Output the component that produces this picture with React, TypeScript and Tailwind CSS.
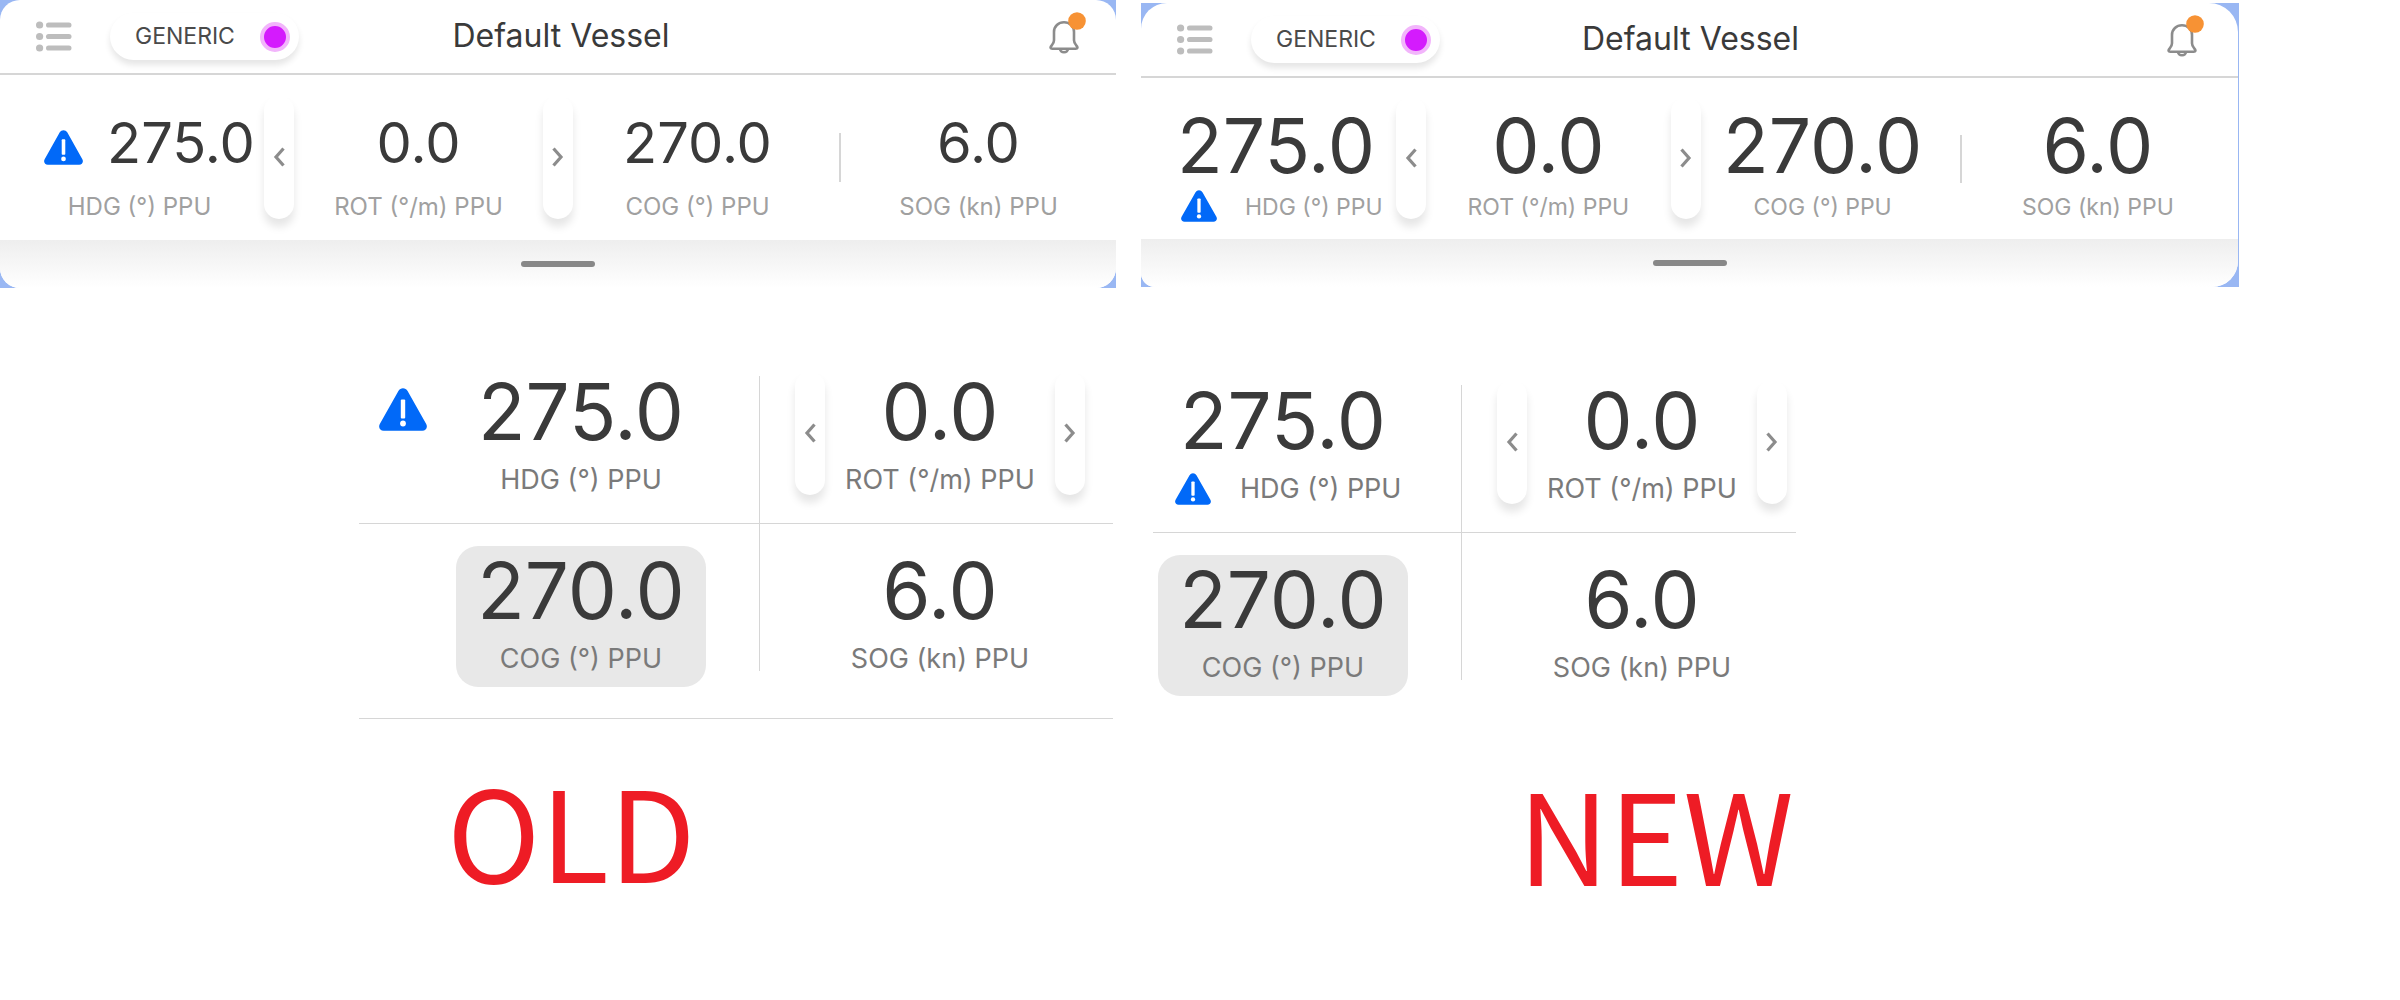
import type { ReactNode } from "react";

function ListIcon() {
  return (
    <svg width="36" height="32" viewBox="0 0 36 32" fill="#bdbdbd" aria-hidden="true">
      {[4, 15.5, 27].map((y) => (
        <g key={y}>
          <circle cx="3.6" cy={y} r="3.6" />
          <rect x="10" y={y - 2.6} width="25.5" height="5.2" rx="2.6" />
        </g>
      ))}
    </svg>
  );
}

function BellIcon() {
  return (
    <svg width="37" height="50" viewBox="0 0 37 50" fill="none" aria-hidden="true">
      <path
        d="M15 10.3c-5.6 0-10 4-10 9.6v8.3c0 2.2-.9 3.700-2.300 5.300-1.900 2-1.200 3.200.6 3.200h23.400c1.800 0 2.500-1.200.6-3.200-1.400-1.600-2.300-3.100-2.300-5.300v-8.300c0-5.600-4.400-9.600-10-9.600z"
        stroke="#8c8c8c"
        strokeWidth="2.600"
      />
      <path d="M11 36.500a4 3.800 0 0 0 8 0" stroke="#8c8c8c" strokeWidth="2.600" />
      <circle cx="28" cy="9" r="8.800" fill="#f79234" />
    </svg>
  );
}

function WarningIcon({ className }: { className: string }) {
  return (
    <svg viewBox="0 0 48 43" preserveAspectRatio="none" className={className} role="img" aria-label="Warning">
      <path
        d="M19.400 2.900c2-3.600 7.200-3.600 9.200 0l18.600 33.100c1.800 3.200-.3 6.700-3.900 6.700H4.700c-3.600 0-5.700-3.500-3.900-6.700z"
        fill="#0169f8"
      />
      <rect x="21.800" y="11.500" width="4.400" height="19" rx="1" fill="#fff" />
      <circle cx="24" cy="35.500" r="2.900" fill="#fff" />
    </svg>
  );
}

function Chevron({ dir }: { dir: "left" | "right" }) {
  return (
    <svg width="12" height="20" viewBox="0 0 12 20" fill="none" stroke="#8c8c8c" strokeWidth="3.200" aria-hidden="true">
      {dir === "left" ? <path d="M10.500 1.500 3 10l7.500 8.500" /> : <path d="M1.500 1.500 9 10l-7.500 8.500" />}
    </svg>
  );
}

function Stepper({ dir, className }: { dir: "left" | "right"; className: string }) {
  return (
    <button
      type="button"
      aria-label={dir === "left" ? "Previous" : "Next"}
      className={`flex w-[30px] shrink-0 items-center justify-center self-end rounded-[15px] bg-white shadow-[0_8px_8px_rgba(0,0,0,0.1)] ${className}`}
    >
      <Chevron dir={dir} />
    </button>
  );
}

function TopPanel({
  corners,
  frame,
  endPad,
  children,
}: {
  corners: string;
  frame: string;
  endPad: string;
  children: ReactNode;
}) {
  return (
    <section className={`bg-[#99b7f3] ${frame}`}>
      <div className={`overflow-hidden bg-white ${corners}`}>
        <header
          className={`grid grid-cols-[1fr_auto_1fr] items-center border-b-2 border-[#d6d6d6] pl-9 ${endPad}`}
        >
          <div className="flex items-center gap-[38px]">
            <button type="button" aria-label="Menu">
              <ListIcon />
            </button>
            <button
              type="button"
              className="my-[13px] flex h-[47px] w-[189px] items-center justify-between rounded-[24px] bg-white pr-[9px] pl-[25px] text-[23px] text-[#4a4a4a] shadow-[0_5px_6px_rgba(0,0,0,0.1)]"
            >
              GENERIC
              <span className="size-[30px] rounded-full border-4 border-[#f2b5fb] bg-[#d41bfd]" />
            </button>
          </div>
          <h1 className="pb-[2px] text-[32px] leading-10 text-[#3a3a3a]">Default Vessel</h1>
          <button type="button" aria-label="Notifications" className="justify-self-end">
            <BellIcon />
          </button>
        </header>
        {children}
        <div className="flex h-12 items-center justify-center bg-linear-to-b from-[#eeeeee] to-white">
          <div className="h-[6px] w-[74px] rounded-full bg-[#888888]" />
        </div>
      </div>
    </section>
  );
}

function OldTopStats() {
  return (
    <div className="grid h-[165px] grid-cols-4 text-[24px] leading-[26px] text-[#a0a0a0]">
      <div className="flex flex-col gap-[22px] pt-10">
        <div className="flex items-center gap-6 pl-11">
          <WarningIcon className="mt-2 h-[35px] w-[39px] shrink-0" />
          <span className="text-[56px] leading-[57px] text-[#3a3a3a]">275.0</span>
        </div>
        <span className="text-center">HDG (°) PPU</span>
      </div>
      <div className="-mx-[15px] flex justify-between">
        <Stepper dir="left" className="mb-[21px] h-[124px]" />
        <TopValue value="0.0" label="ROT (°/m) PPU" />
        <Stepper dir="right" className="mb-[21px] h-[124px]" />
      </div>
      <TopValue value="270.0" label="COG (°) PPU" />
      <div className="flex">
        <div className="mt-[58px] ml-0.5 h-[49px] w-[2px] bg-[#d6d6d6]" />
        <TopValue value="6.0" label="SOG (kn) PPU" />
      </div>
    </div>
  );
}

function TopValue({ value, label }: { value: string; label: string }) {
  return (
    <div className="flex flex-1 flex-col items-center gap-[22px] pt-10">
      <span className="text-[56px] leading-[57px] text-[#3a3a3a]">{value}</span>
      <span className="whitespace-nowrap">{label}</span>
    </div>
  );
}

function NewTopValue({ value, label }: { value: string; label: string }) {
  return (
    <div className="flex flex-1 flex-col items-center gap-3 pt-[30px]">
      <span className="text-[75px] leading-[75px] text-[#3a3a3a]">{value}</span>
      <span className="whitespace-nowrap">{label}</span>
    </div>
  );
}

function NewTopStats() {
  return (
    <div className="mr-1 -ml-1 grid h-[161px] grid-cols-4 text-[23px] leading-[25px] text-[#a0a0a0]">
      <div className="flex flex-col gap-3 pt-[30px] pl-10">
        <span className="text-[75px] leading-[75px] text-[#3a3a3a]">275.0</span>
        <div className="flex h-[25px] items-center gap-7 pl-1">
          <WarningIcon className="mb-1 h-8 w-9 shrink-0" />
          <span className="whitespace-nowrap">HDG (°) PPU</span>
        </div>
      </div>
      <div className="-mx-[15px] flex justify-between">
        <Stepper dir="left" className="mb-5 h-[122px]" />
        <NewTopValue value="0.0" label="ROT (°/m) PPU" />
        <Stepper dir="right" className="mb-5 h-[122px]" />
      </div>
      <NewTopValue value="270.0" label="COG (°) PPU" />
      <div className="flex">
        <div className="mt-[57px] h-12 w-[2px] bg-[#d6d6d6]" />
        <NewTopValue value="6.0" label="SOG (kn) PPU" />
      </div>
    </div>
  );
}

function BigValue({ value, label, icon }: { value: string; label: string; icon?: ReactNode }) {
  return (
    <div className="flex flex-1 flex-col items-center gap-[17px]">
      <span className="text-[78px] leading-[72px] text-[#3a3a3a]">{value}</span>
      {icon ? (
        <div className="flex h-[30px] items-center gap-[29px] self-start pl-[17px]">
          {icon}
          <span className="leading-[30px] whitespace-nowrap">{label}</span>
        </div>
      ) : (
        <span className="leading-[30px] whitespace-nowrap">{label}</span>
      )}
    </div>
  );
}

function SelectedCard() {
  return (
    <div className="mt-[22px] flex w-[250px] rounded-[22px] bg-[#e8e8e8] pt-[9px] pb-[13px]">
      <BigValue value="270.0" label="COG (°) PPU" />
    </div>
  );
}

function RotCell({ className }: { className: string }) {
  return (
    <div className={`flex flex-1 ${className}`}>
      <Stepper dir="left" className="mb-7 h-[124px]" />
      <BigValue value="0.0" label="ROT (°/m) PPU" />
      <Stepper dir="right" className="mb-7 h-[124px]" />
    </div>
  );
}

function Divider() {
  return <div className="h-[147px] w-px shrink-0 bg-[#d6d6d6]" />;
}

export default function App() {
  return (
    <main className="grid min-h-screen grid-cols-[1116fr_1098fr] items-start gap-x-[25px] bg-white pr-[161px] font-['Inter',sans-serif]">
      <div>
        <TopPanel corners="rounded-[20px]" frame="" endPad="pr-[30px]">
          <OldTopStats />
        </TopPanel>

        <section className="mt-[88px] ml-[359px] max-w-[754px] text-[27px] text-[#7a7a7a]">
          <div className="flex h-[148px] border-b border-[#d6d6d6]">
            <div className="flex w-[400px] pr-[53px] pl-5">
              <WarningIcon className="mt-3 mr-[29px] h-[43px] w-12 shrink-0" />
              <BigValue value="275.0" label="HDG (°) PPU" />
            </div>
            <Divider />
            <RotCell className="pr-7 pl-[35px]" />
          </div>
          <div className="flex h-[195px] border-b border-[#d6d6d6]">
            <div className="flex w-[400px] items-start justify-end pr-[53px]">
              <SelectedCard />
            </div>
            <Divider />
            <div className="flex flex-1 pt-[31px] pr-7 pl-[35px]">
              <BigValue value="6.0" label="SOG (kn) PPU" />
            </div>
          </div>
        </section>

        <p className="mt-[46px] ml-[447px] font-['Noto_Sans_CJK_SC',sans-serif] text-[126px] leading-[127px] text-[#ee1c25]">
          OLD
        </p>
      </div>

      <div className="pt-[3px]">
        <TopPanel
          corners="rounded-tl-[26px] rounded-tr-[29px] rounded-br-[26px] rounded-bl-[14px]"
          frame="pr-px"
          endPad="pr-[34px]"
        >
          <NewTopStats />
        </TopPanel>

        <section className="mt-[98px] ml-3 max-w-[643px] text-[27px] text-[#7a7a7a]">
          <div className="flex h-[148px] border-b border-[#d6d6d6]">
            <div className="flex w-[308px] pr-[53px] pl-[5px]">
              <BigValue value="275.0" label="HDG (°) PPU" icon={<WarningIcon className="h-8 w-9 shrink-0" />} />
            </div>
            <Divider />
            <RotCell className="pr-[9px] pl-[35px]" />
          </div>
          <div className="flex h-[195px]">
            <div className="flex w-[308px] items-start pl-[5px]">
              <SelectedCard />
            </div>
            <Divider />
            <div className="flex flex-1 pt-[31px] pr-[9px] pl-[35px]">
              <BigValue value="6.0" label="SOG (kn) PPU" />
            </div>
          </div>
        </section>

        <p className="mt-10 ml-[377px] font-['Noto_Sans_CJK_SC',sans-serif] text-[126px] leading-[127px] text-[#ee1c25]">
          NEW
        </p>
      </div>
    </main>
  );
}
